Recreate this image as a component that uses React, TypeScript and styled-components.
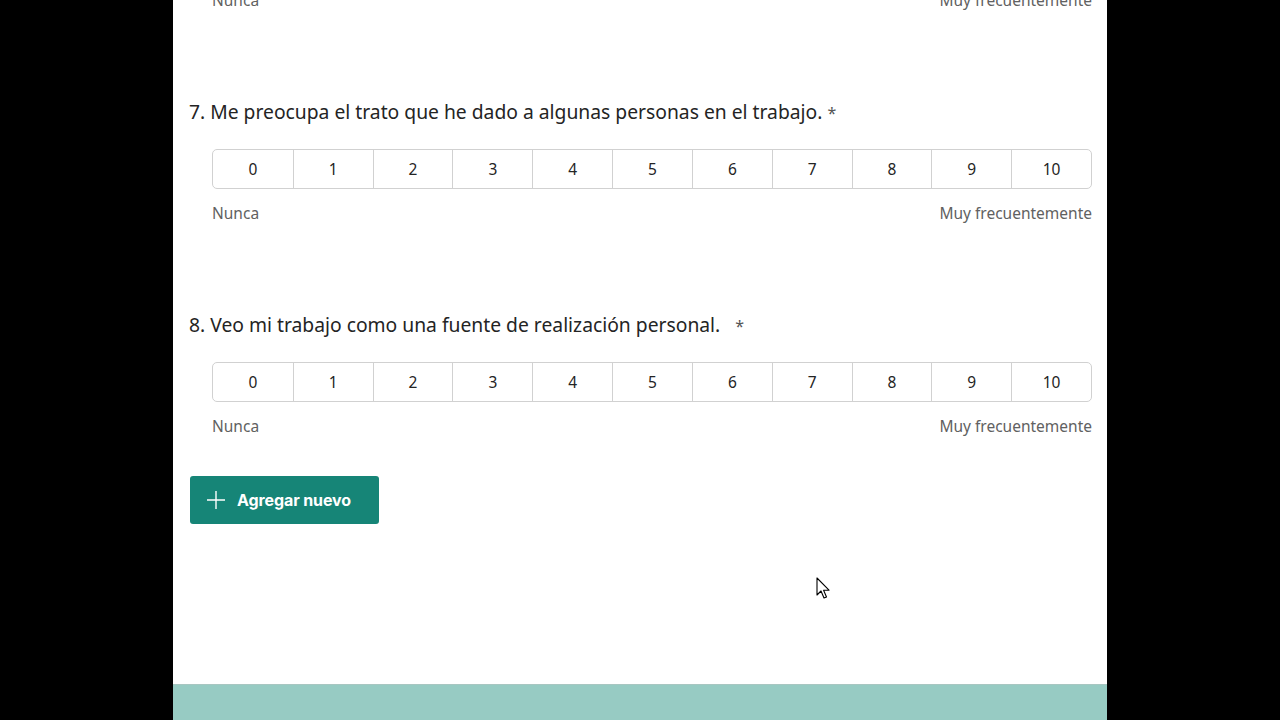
import React from "react";
import styled, { createGlobalStyle } from "styled-components";

const Global = createGlobalStyle`
  html, body { margin: 0; padding: 0; background: #000; }
  body { font-family: "Noto Sans", "Open Sans", sans-serif; overflow: hidden; }
`;

const Screen = styled.div`
  width: 1280px;
  height: 720px;
  display: flex;
  justify-content: center;
  background: #000;
  overflow: hidden;
`;

const Panel = styled.div`
  width: 934px;
  height: 720px;
  background: #fff;
  display: flex;
  flex-direction: column;
  overflow: hidden;
`;

const Content = styled.div`
  flex: 1;
  padding: 0 15px 0 16px;
  display: flex;
  flex-direction: column;
`;

const Labels = styled.div<{ $first?: boolean }>`
  display: flex;
  justify-content: space-between;
  margin-left: 23px;
  margin-top: ${(p) => (p.$first ? "-11px" : "13px")};
  font-size: 15.5px;
  line-height: 22px;
  color: #616161;
`;

const Title = styled.div`
  margin-top: 89px;
  font-size: 19.3px;
  line-height: 24px;
  color: #242424;
  white-space: pre;
`;

const Star = styled.span`
  color: #555;
  font-size: 16px;
`;

const Scale = styled.div`
  margin-top: 24px;
  margin-left: 23px;
  height: 40px;
  display: grid;
  grid-template-columns: repeat(11, 1fr);
  border: 1px solid #d1d1d1;
  border-radius: 5px;
  box-sizing: border-box;
  overflow: hidden;
`;

const Cell = styled.div`
  display: flex;
  align-items: center;
  justify-content: center;
  font-size: 15.5px;
  color: #242424;
  & + & { border-left: 1px solid #d1d1d1; }
`;

const AddButton = styled.button`
  margin-top: 39px;
  margin-left: 1px;
  width: 189px;
  height: 48px;
  display: flex;
  align-items: center;
  gap: 11px;
  padding: 0 0 0 16px;
  border: none;
  border-radius: 3px;
  background: #168577;
  color: #fff;
  font-family: "Inter", "Noto Sans", sans-serif;
  font-weight: 700;
  font-size: 16px;
  letter-spacing: -0.1px;
  cursor: pointer;
`;

const Cursor = styled.svg`
  position: absolute;
  left: 816px;
  top: 577px;
`;

const Footer = styled.div`
  height: 36px;
  box-sizing: border-box;
  background: #97cbc3;
  border-top: 1px solid #a8c6c1;
`;

const nums = Array.from({ length: 11 }, (_, i) => i);

function Question({ title }: { title: string }) {
  return (
    <>
      <Title>
        {title}
        <Star>*</Star>
      </Title>
      <Scale>
        {nums.map((n) => (
          <Cell key={n}>{n}</Cell>
        ))}
      </Scale>
      <Labels>
        <span>Nunca</span>
        <span>Muy frecuentemente</span>
      </Labels>
    </>
  );
}

export default function App() {
  return (
    <>
      <Global />
      <Screen>
        <Panel>
          <Content>
            <Labels $first>
              <span>Nunca</span>
              <span>Muy frecuentemente</span>
            </Labels>
            <Question title="7. Me preocupa el trato que he dado a algunas personas en el trabajo. " />
            <Question title="8. Veo mi trabajo como una fuente de realización personal.   " />
            <AddButton>
              <svg width="20" height="20" viewBox="0 0 20 20">
                <path d="M10 1v18M1 10h18" stroke="#fff" strokeWidth="1.4" fill="none" />
              </svg>
              Agregar nuevo
            </AddButton>
          </Content>
          <Footer />
        </Panel>
      </Screen>
      <Cursor width="16" height="24" viewBox="0 0 16 24">
        <path d="M1 1 L1 18 L5 14 L8 21 L10.5 20 L7.6 13.2 L13 13.2 Z" fill="#fff" stroke="#000" strokeWidth="1.1" strokeLinejoin="round" />
      </Cursor>
    </>
  );
}
